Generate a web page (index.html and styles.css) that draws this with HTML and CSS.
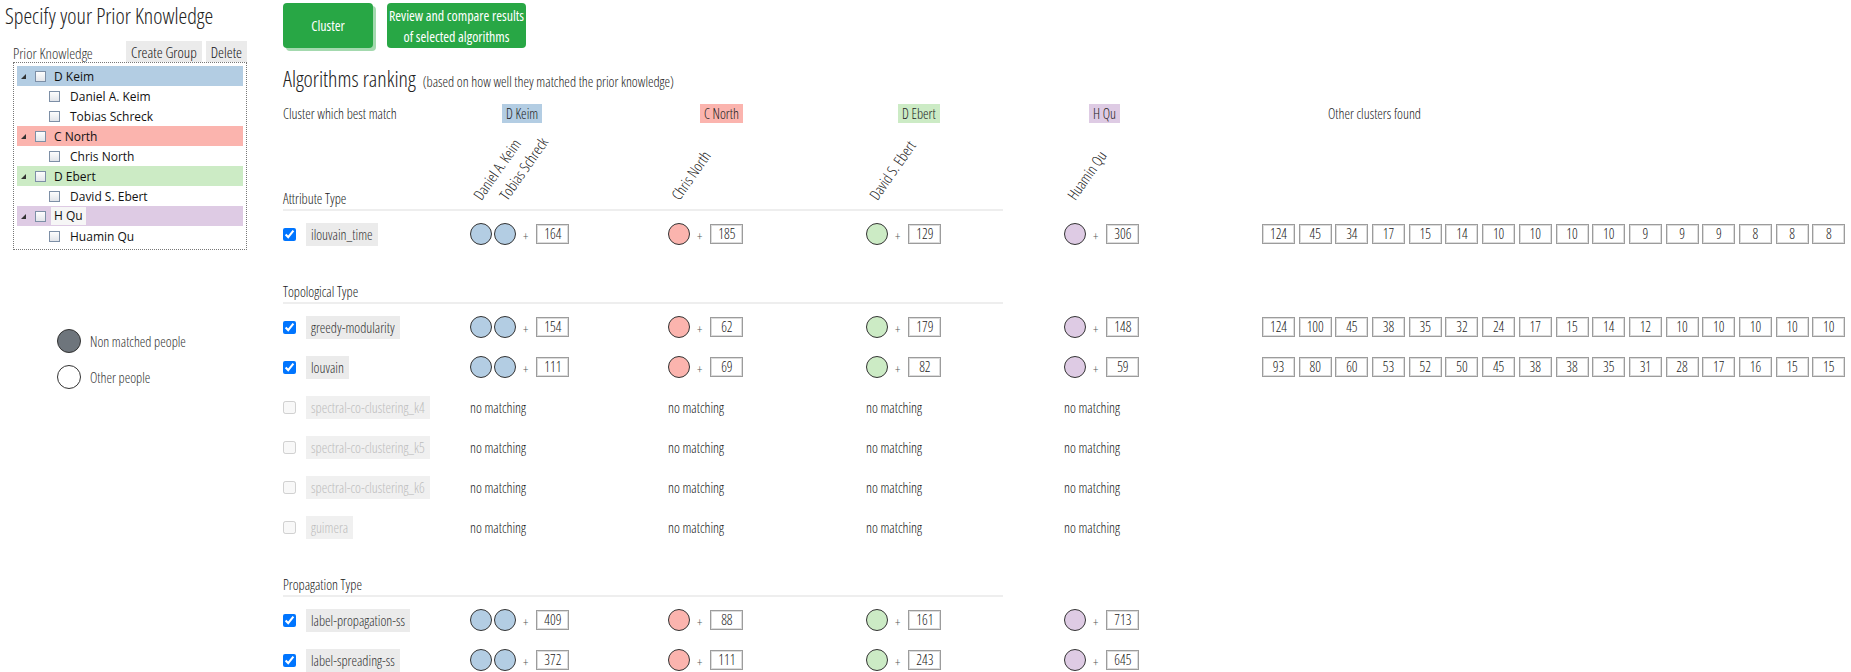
FILE: index.html
```html
<!DOCTYPE html>
<html lang="en">
<head>
  <meta charset="UTF-8">
  <title>Prior Knowledge Clustering</title>
  <link rel="stylesheet" href="styles.css">
</head>
<body>

  <div class="page">

    <aside class="sidebar">
      <h1>Specify your Prior Knowledge</h1>

      <div class="pk-bar">
        <span class="pk-label">Prior Knowledge</span>
        <button class="pk-btn">Create Group</button>
        <button class="pk-btn">Delete</button>
      </div>

      <div class="tree">
        <div class="node group keim"><span class="tri"></span><span class="cb"></span><span class="name">D Keim</span></div>
        <div class="node leaf"><span class="cb"></span><span class="name">Daniel A. Keim</span></div>
        <div class="node leaf"><span class="cb"></span><span class="name">Tobias Schreck</span></div>
        <div class="node group north"><span class="tri"></span><span class="cb"></span><span class="name">C North</span></div>
        <div class="node leaf"><span class="cb"></span><span class="name">Chris North</span></div>
        <div class="node group ebert"><span class="tri"></span><span class="cb"></span><span class="name">D Ebert</span></div>
        <div class="node leaf"><span class="cb"></span><span class="name">David S. Ebert</span></div>
        <div class="node group qu"><span class="tri"></span><span class="cb"></span><span class="name editing">H Qu</span></div>
        <div class="node leaf"><span class="cb"></span><span class="name">Huamin Qu</span></div>
      </div>

      <div class="legend">
        <div class="legend-item"><span class="dot dark"></span>Non matched people</div>
        <div class="legend-item"><span class="dot"></span>Other people</div>
      </div>
    </aside>

    <main class="main">
      <div class="actions">
        <button class="btn btn-cluster">Cluster</button>
        <button class="btn btn-review">Review and compare results<br>of selected algorithms</button>
      </div>

      <h2 class="ranking">Algorithms ranking <small>(based on how well they matched the prior knowledge)</small></h2>

      <div class="row head-row">
        <div class="lead">Cluster which best match</div>
        <div class="col"><span class="tag keim">D Keim</span></div>
        <div class="col"><span class="tag north">C North</span></div>
        <div class="col"><span class="tag ebert">D Ebert</span></div>
        <div class="col col-short"><span class="tag qu">H Qu</span></div>
        <div class="others others-title">Other clusters found</div>
      </div>

      <!-- attribute based -->
      <div class="section-head first">
        <div class="lead">Attribute Type</div>
        <div class="col names"><span class="rot">Daniel A. Keim</span><span class="rot">Tobias Schreck</span></div>
        <div class="col names"><span class="rot">Chris North</span></div>
        <div class="col names"><span class="rot">David S. Ebert</span></div>
        <div class="col names"><span class="rot">Huamin Qu</span></div>
      </div>

      <div class="row">
        <div class="lead"><input type="checkbox" checked><span class="algo">ilouvain_time</span></div>
        <div class="col"><span class="dot keim"></span><span class="dot keim"></span><span class="plus">+</span><span class="num">164</span></div>
        <div class="col"><span class="dot north"></span><span class="plus">+</span><span class="num">185</span></div>
        <div class="col"><span class="dot ebert"></span><span class="plus">+</span><span class="num">129</span></div>
        <div class="col"><span class="dot qu"></span><span class="plus">+</span><span class="num">306</span></div>
        <div class="others">
          <span class="num">124</span><span class="num">45</span><span class="num">34</span><span class="num">17</span><span class="num">15</span><span class="num">14</span><span class="num">10</span><span class="num">10</span><span class="num">10</span><span class="num">10</span><span class="num">9</span><span class="num">9</span><span class="num">9</span><span class="num">8</span><span class="num">8</span><span class="num">8</span>
        </div>
      </div>

      <!-- topology based -->
      <div class="section-head">
        <div class="lead">Topological Type</div>
      </div>

      <div class="row">
        <div class="lead"><input type="checkbox" checked><span class="algo">greedy-modularity</span></div>
        <div class="col"><span class="dot keim"></span><span class="dot keim"></span><span class="plus">+</span><span class="num">154</span></div>
        <div class="col"><span class="dot north"></span><span class="plus">+</span><span class="num">62</span></div>
        <div class="col"><span class="dot ebert"></span><span class="plus">+</span><span class="num">179</span></div>
        <div class="col"><span class="dot qu"></span><span class="plus">+</span><span class="num">148</span></div>
        <div class="others">
          <span class="num">124</span><span class="num">100</span><span class="num">45</span><span class="num">38</span><span class="num">35</span><span class="num">32</span><span class="num">24</span><span class="num">17</span><span class="num">15</span><span class="num">14</span><span class="num">12</span><span class="num">10</span><span class="num">10</span><span class="num">10</span><span class="num">10</span><span class="num">10</span>
        </div>
      </div>

      <div class="row">
        <div class="lead"><input type="checkbox" checked><span class="algo">louvain</span></div>
        <div class="col"><span class="dot keim"></span><span class="dot keim"></span><span class="plus">+</span><span class="num">111</span></div>
        <div class="col"><span class="dot north"></span><span class="plus">+</span><span class="num">69</span></div>
        <div class="col"><span class="dot ebert"></span><span class="plus">+</span><span class="num">82</span></div>
        <div class="col"><span class="dot qu"></span><span class="plus">+</span><span class="num">59</span></div>
        <div class="others">
          <span class="num">93</span><span class="num">80</span><span class="num">60</span><span class="num">53</span><span class="num">52</span><span class="num">50</span><span class="num">45</span><span class="num">38</span><span class="num">38</span><span class="num">35</span><span class="num">31</span><span class="num">28</span><span class="num">17</span><span class="num">16</span><span class="num">15</span><span class="num">15</span>
        </div>
      </div>

      <div class="row off">
        <div class="lead"><input type="checkbox" disabled><span class="algo">spectral-co-clustering_k4</span></div>
        <div class="col">no matching</div>
        <div class="col">no matching</div>
        <div class="col">no matching</div>
        <div class="col">no matching</div>
      </div>

      <div class="row off">
        <div class="lead"><input type="checkbox" disabled><span class="algo">spectral-co-clustering_k5</span></div>
        <div class="col">no matching</div>
        <div class="col">no matching</div>
        <div class="col">no matching</div>
        <div class="col">no matching</div>
      </div>

      <div class="row off">
        <div class="lead"><input type="checkbox" disabled><span class="algo">spectral-co-clustering_k6</span></div>
        <div class="col">no matching</div>
        <div class="col">no matching</div>
        <div class="col">no matching</div>
        <div class="col">no matching</div>
      </div>

      <div class="row off">
        <div class="lead"><input type="checkbox" disabled><span class="algo">guimera</span></div>
        <div class="col">no matching</div>
        <div class="col">no matching</div>
        <div class="col">no matching</div>
        <div class="col">no matching</div>
      </div>

      <!-- propagation based -->
      <div class="section-head">
        <div class="lead">Propagation Type</div>
      </div>

      <div class="row">
        <div class="lead"><input type="checkbox" checked><span class="algo">label-propagation-ss</span></div>
        <div class="col"><span class="dot keim"></span><span class="dot keim"></span><span class="plus">+</span><span class="num">409</span></div>
        <div class="col"><span class="dot north"></span><span class="plus">+</span><span class="num">88</span></div>
        <div class="col"><span class="dot ebert"></span><span class="plus">+</span><span class="num">161</span></div>
        <div class="col"><span class="dot qu"></span><span class="plus">+</span><span class="num">713</span></div>
      </div>

      <div class="row">
        <div class="lead"><input type="checkbox" checked><span class="algo">label-spreading-ss</span></div>
        <div class="col"><span class="dot keim"></span><span class="dot keim"></span><span class="plus">+</span><span class="num">372</span></div>
        <div class="col"><span class="dot north"></span><span class="plus">+</span><span class="num">111</span></div>
        <div class="col"><span class="dot ebert"></span><span class="plus">+</span><span class="num">243</span></div>
        <div class="col"><span class="dot qu"></span><span class="plus">+</span><span class="num">645</span></div>
      </div>
    </main>

  </div>

</body>
</html>
```

FILE: styles.css
```css
body {
  margin: 0;
  font-family: "Open Sans", sans-serif;
  font-stretch: 75%;
  font-weight: 300;
  font-size: 14px;
  color: #222;
  background: #fff;
  overflow: hidden;
}

button {
  font-family: inherit;
  font-stretch: inherit;
  cursor: pointer;
}

.page {
  display: flex;
  align-items: flex-start;
}

/* ---- left panel ---- */

.sidebar {
  width: 283px;
  flex-shrink: 0;
}

.sidebar h1 {
  margin: 0 0 0 5px;
  font-size: 22px;
  line-height: 30px;
  font-weight: 300;
}

.pk-bar {
  display: flex;
  align-items: flex-end;
  margin: 11px 0 0 13px;
  width: 234px;
  height: 21px;
}

.pk-label {
  flex: 1;
  font-size: 15px;
  line-height: 17px;
  color: #333;
}

.pk-btn {
  height: 21px;
  margin-left: 4px;
  padding: 0 5px;
  border: none;
  background: #ebebeb;
  font-size: 15px;
  font-weight: 300;
  color: #111;
}

.tree {
  margin-left: 13px;
  width: 226px;
  padding: 3px;
  border: 1px dotted #777;
  font-family: "Open Sans", sans-serif;
  font-stretch: 100%;
  font-weight: 400;
  font-size: 12px;
  color: #111;
}

.node {
  display: flex;
  align-items: center;
  height: 20px;
}

.node.group {
  padding-left: 4px;
}

.node.leaf {
  padding-left: 32px;
}

.keim { background: #b3cde3; }
.north { background: #fbb4ae; }
.ebert { background: #ccebc5; }
.qu { background: #decbe4; }

.tri {
  width: 0;
  height: 0;
  border-left: 5px solid transparent;
  border-bottom: 5px solid #333;
  margin-right: 9px;
}

.cb {
  width: 9px;
  height: 9px;
  border: 1px solid #7d8fa6;
  background: linear-gradient(#fdfdfd, #e2e5ea);
  margin-right: 8px;
}

.leaf .cb {
  margin-right: 10px;
}

.name.editing {
  background: #f6f6f6;
  padding: 0 3px;
  margin-left: -3px;
  line-height: 18px;
}

.legend {
  margin: 79px 0 0 57px;
}

.legend-item {
  display: flex;
  align-items: center;
  height: 24px;
  margin-bottom: 12px;
  font-size: 14px;
  color: #333;
}

.legend-item .dot {
  width: 22px;
  height: 22px;
  margin-right: 9px;
  background: #fff;
}

.legend-item .dot.dark {
  background: #6e757c;
}

/* ---- main area ---- */

.main {
  flex: 1;
}

.actions {
  display: flex;
  margin-top: 3px;
}

.btn {
  height: 45px;
  padding: 0 5px;
  margin-right: 14px;
  border: none;
  border-radius: 4px;
  background: #28a745;
  color: #fff;
  font-size: 14px;
  font-weight: 400;
  line-height: 21px;
}

.btn-cluster {
  width: 90px;
  box-shadow: 3px 3px 0 #a3d9ae;
}

.btn-review {
  width: 139px;
  padding: 0;
}

.ranking {
  margin: 15px 0 0;
  font-size: 22px;
  line-height: 30px;
  font-weight: 300;
}

.ranking small {
  margin-left: 3px;
  font-size: 14px;
}

.row {
  display: flex;
  align-items: center;
  height: 40px;
  white-space: nowrap;
}

.lead {
  width: 187px;
  flex-shrink: 0;
  display: flex;
  align-items: center;
}

.col {
  width: 198px;
  flex-shrink: 0;
  display: flex;
  align-items: center;
}

.others {
  display: flex;
  gap: 3.7px;
}

.head-row {
  height: 19px;
  margin-top: 7px;
  line-height: 19px;
}

.head-row .col {
  padding-left: 32px;
  box-sizing: border-box;
}

.head-row .col-short {
  padding-left: 25px;
}

.tag {
  padding: 0 4px;
  color: #222;
}

.others-title {
  margin-left: 66px;
}

.section-head {
  display: flex;
  align-items: flex-end;
  width: 720px;
  margin-top: 29px;
  padding-bottom: 1px;
  border-bottom: 2px solid #eee;
  margin-bottom: 3px;
  line-height: 18px;
}

.section-head.first {
  height: 85px;
  margin-top: 0;
}

.names {
  height: 18px;
  margin-bottom: 5px;
  padding-left: 14px;
  box-sizing: border-box;
}

.rot {
  display: inline-block;
  width: 26px;
  height: 18px;
  font-size: 15px;
  white-space: nowrap;
  transform: rotate(-55deg);
  transform-origin: 0 100%;
}

.row input[type="checkbox"] {
  margin: 0;
  width: 13px;
  height: 13px;
}

.algo {
  margin-left: 10px;
  padding: 0 5px;
  height: 23px;
  line-height: 23px;
  background: #ebebeb;
  color: #333;
}

.off .algo {
  background: #f0f0f0;
  color: #bdbdbd;
}

.dot {
  display: inline-block;
  width: 20px;
  height: 20px;
  border: 1px solid #333;
  border-radius: 50%;
  margin-right: 2px;
}

.plus {
  margin: 4px 8px 0 5px;
  font-size: 13px;
  color: #555;
}

.num {
  display: inline-block;
  min-width: 31px;
  height: 18px;
  line-height: 18px;
  text-align: center;
  border: 1px solid #9c9c9c;
  box-shadow: inset 0 0 0 1px #dcdcdc;
  color: #222;
}
```
